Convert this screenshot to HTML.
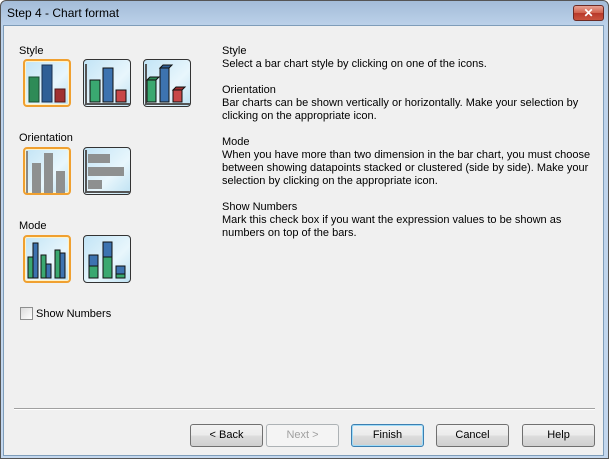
<!DOCTYPE html>
<html><head><meta charset="utf-8"><style>
*{margin:0;padding:0;box-sizing:border-box}
body{width:609px;height:459px;overflow:hidden;background:#fff;font-family:"Liberation Sans",sans-serif;font-size:11px;color:#000;position:relative}
.frame{position:absolute;left:0;top:0;width:609px;height:459px;background:linear-gradient(#a3bcd8,#bdd2ea 25px,#c3d7ee);border:1px solid #555;border-radius:6px 6px 0 0}
.title{position:absolute;left:7px;top:6px;font-size:12px;color:#000}
.close{position:absolute;left:573px;top:5px;width:31px;height:16px;border:1px solid #6b2a24;border-radius:3px;background:linear-gradient(#e8a293,#d0614c 50%,#b8392a 51%,#c9533e);color:#fff;font-weight:bold;text-align:center;font-size:12px;line-height:14px}
.client{position:absolute;left:3px;top:25px;width:601px;height:431px;background:#f0f0f0;border:1px solid #7f9db9}
.lbl{position:absolute;left:19px;font-size:11px}
.ico{position:absolute;width:48px;height:48px;border:1px solid #333;border-radius:4px;background:linear-gradient(135deg,#c2e4f6,#e8f6fc 60%,#bfe2f3);overflow:hidden}
.ico.sel{border:2px solid #f0a030;box-shadow:inset 0 0 0 1px #fff3c8}
.ico svg{position:absolute;left:0;top:0}
.txt{position:absolute;left:222px;top:45px;line-height:13px;width:380px}
.sep{position:absolute;left:14px;top:408px;width:581px;height:1px;background:#a0a0a0;border-bottom:1px solid #fff;box-sizing:content-box}
.btn{position:absolute;top:424px;width:73px;height:23px;border:1px solid #707070;border-radius:3px;background:linear-gradient(#f2f2f2,#ebebeb 50%,#dddddd 51%,#cfcfcf);text-align:center;line-height:21px;font-size:11px}
.btn.dis{color:#a0a0a0;border-color:#adb2b5;background:#f4f4f4}
.btn.def{border-color:#3c7fb1;box-shadow:inset 0 0 0 1px #a0dcf8}
.cb{position:absolute;left:20px;top:307px;width:13px;height:13px;border:1px solid #8e8f8f;background:linear-gradient(135deg,#dcdcdc,#fff)}
</style></head><body>
<div class="frame"></div>
<div class="title">Step 4 - Chart format</div>
<div class="close">✕</div>
<div class="client"></div>

<div class="lbl" style="top:45px">Style</div>
<div class="ico sel" style="left:23px;top:59px"><svg width="46" height="46"><rect x="4" y="16" width="10" height="25" fill="#2e8b57" stroke="#1a4d30"/><rect x="17" y="4" width="10" height="37" fill="#2f5f96" stroke="#1a3050"/><rect x="30" y="28" width="10" height="13" fill="#a03030" stroke="#501818"/></svg></div>
<div class="ico" style="left:83px;top:59px"><svg width="46" height="46"><path d="M2 4V44H46" stroke="#555" stroke-width="2" fill="none"/><rect x="6" y="20" width="10" height="22" fill="#3aa870" stroke="#111"/><rect x="19" y="8" width="10" height="34" fill="#3d73b0" stroke="#111"/><rect x="32" y="30" width="10" height="12" fill="#c84848" stroke="#111"/></svg></div>
<div class="ico" style="left:143px;top:59px"><svg width="46" height="46"><path d="M2 4V44H46" stroke="#555" stroke-width="2" fill="none"/><rect x="3" y="20" width="9" height="22" fill="#3aa870" stroke="#111"/><path d="M3 20l3-3h9l-3 3z" fill="#2e8b57" stroke="#111"/><rect x="16" y="8" width="9" height="34" fill="#3d73b0" stroke="#111"/><path d="M16 8l3-3h9l-3 3z" fill="#2f5f96" stroke="#111"/><rect x="29" y="30" width="9" height="12" fill="#c84848" stroke="#111"/><path d="M29 30l3-3h9l-3 3z" fill="#a03030" stroke="#111"/></svg></div>

<div class="lbl" style="top:132px">Orientation</div>
<div class="ico sel" style="left:23px;top:147px"><svg width="46" height="46"><path d="M2 2V46" stroke="#888" stroke-width="2"/><rect x="7" y="14" width="9" height="32" fill="#8e9090"/><rect x="19" y="4" width="9" height="42" fill="#8e9090"/><rect x="31" y="22" width="9" height="24" fill="#8e9090"/></svg></div>
<div class="ico" style="left:83px;top:147px"><svg width="46" height="46"><path d="M2 2V44H46" stroke="#555" stroke-width="2" fill="none"/><rect x="4" y="6" width="22" height="9" fill="#8e9090"/><rect x="4" y="19" width="36" height="9" fill="#8e9090"/><rect x="4" y="32" width="14" height="9" fill="#8e9090"/></svg></div>

<div class="lbl" style="top:220px">Mode</div>
<div class="ico sel" style="left:23px;top:235px"><svg width="46" height="46"><rect x="3" y="20" width="5" height="21" fill="#3aa870" stroke="#111"/><rect x="8" y="6" width="5" height="35" fill="#3d73b0" stroke="#111"/><rect x="16" y="18" width="5" height="23" fill="#3aa870" stroke="#111"/><rect x="21" y="27" width="5" height="14" fill="#3d73b0" stroke="#111"/><rect x="30" y="13" width="5" height="28" fill="#3aa870" stroke="#111"/><rect x="35" y="16" width="5" height="25" fill="#3d73b0" stroke="#111"/></svg></div>
<div class="ico" style="left:83px;top:235px"><svg width="46" height="46"><rect x="5" y="19" width="9" height="11" fill="#3d73b0" stroke="#111"/><rect x="5" y="30" width="9" height="12" fill="#3aa870" stroke="#111"/><rect x="19" y="6" width="9" height="15" fill="#3d73b0" stroke="#111"/><rect x="19" y="21" width="9" height="21" fill="#3aa870" stroke="#111"/><rect x="32" y="30" width="9" height="8" fill="#3d73b0" stroke="#111"/><rect x="32" y="38" width="9" height="4" fill="#3aa870" stroke="#111"/></svg></div>

<div class="cb"></div>
<div class="lbl" style="left:36px;top:308px">Show Numbers</div>

<div class="txt">Style<br>Select a bar chart style by clicking on one of the icons.<br><br>Orientation<br>Bar charts can be shown vertically or horizontally. Make your selection by<br>clicking on the appropriate icon.<br><br>Mode<br>When you have more than two dimension in the bar chart, you must choose<br>between showing datapoints stacked or clustered (side by side). Make your<br>selection by clicking on the appropriate icon.<br><br>Show Numbers<br>Mark this check box if you want the expression values to be shown as<br>numbers on top of the bars.</div>

<div class="sep"></div>
<div class="btn" style="left:190px">&lt; Back</div>
<div class="btn dis" style="left:266px">Next &gt;</div>
<div class="btn def" style="left:351px">Finish</div>
<div class="btn" style="left:436px">Cancel</div>
<div class="btn" style="left:522px">Help</div>
</body></html>
